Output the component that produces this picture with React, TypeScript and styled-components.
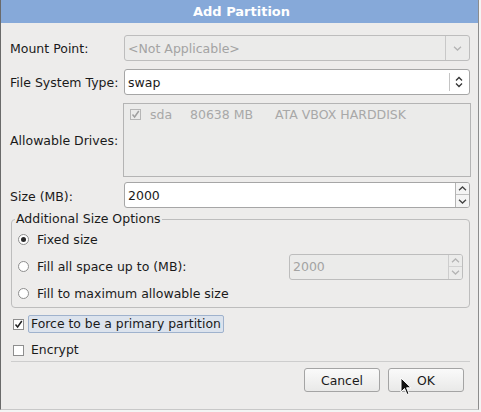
import React from "react";
import styled, { createGlobalStyle } from "styled-components";

const Global = createGlobalStyle`
  html, body { margin: 0; padding: 0; background: #f4f4f4; }
  body { font-family: "DejaVu Sans", "Liberation Sans", sans-serif; font-size: 12.5px; color: #1a1a1a; }
`;

const Window = styled.div`
  position: relative;
  width: 477px;
  height: 409px;
  background: #edeceb;
  border-left: 1px solid #6a6a6a;
  border-right: 1px solid #8c8c8c;
  border-bottom: 1px solid #c8c8c8;
  display: flex;
  flex-direction: column;
  overflow: hidden;
`;

const TitleBar = styled.div`
  height: 23px;
  background: #86a9d9;
  color: #ffffff;
  font-weight: bold;
  font-size: 13px;
  display: flex;
  align-items: center;
  justify-content: center;
  padding-left: 4px;
`;

const Body = styled.div`
  display: flex;
  flex-direction: column;
  padding: 12px 8px 0 9px;
`;

const FormGrid = styled.div`
  display: grid;
  grid-template-columns: 114px 1fr;
  row-gap: 8px;
  align-items: center;
`;

const Label = styled.div`
  white-space: nowrap;
`;

const Field = styled.div<{ $disabled?: boolean }>`
  height: 26px;
  box-sizing: border-box;
  border: 1px solid ${(p) => (p.$disabled ? "#bdbdbd" : "#a6a6a6")};
  border-radius: 3px;
  background: ${(p) => (p.$disabled ? "#ebebea" : "#ffffff")};
  color: ${(p) => (p.$disabled ? "#a3a3a3" : "#1a1a1a")};
  display: flex;
  align-items: center;
  overflow: hidden;
`;

const SizeField = styled(Field)`
  margin-top: -3px;
`;

const FieldText = styled.div`
  flex: 1;
  padding-left: 3px;
  white-space: nowrap;
`;

const ComboButton = styled.div`
  width: 24px;
  height: 100%;
  border-left: 1px solid #c8c8c8;
  display: flex;
  align-items: center;
  justify-content: center;
  box-sizing: border-box;
`;

const ComboSplit = styled.div`
  width: 20px;
  height: 100%;
  display: flex;
  align-items: center;
  justify-content: center;
  position: relative;
  &::before {
    content: "";
    position: absolute;
    left: 0;
    top: 3px;
    bottom: 3px;
    border-left: 1px solid #c4c4c4;
  }
`;

const SpinButtons = styled.div<{ $disabled?: boolean }>`
  width: 13px;
  height: 100%;
  border-left: 1px solid ${(p) => (p.$disabled ? "#cdcdcd" : "#b4b4b4")};
  display: grid;
  grid-template-rows: 1fr 1fr;
  background: ${(p) => (p.$disabled ? "#ebebea" : "#f4f4f4")};
`;

const SpinHalf = styled.div<{ $top?: boolean; $disabled?: boolean }>`
  display: flex;
  align-items: center;
  justify-content: center;
  border-bottom: ${(p) => (p.$top ? `1px solid ${p.$disabled ? "#d2d2d2" : "#c0c0c0"}` : "none")};
`;

const DriveBox = styled.div`
  height: 74px;
  box-sizing: border-box;
  border: 1px solid #b4b4b4;
  background: #ebebea;
  margin-left: -1px;
  margin-right: -1px;
  padding: 4px 0 0 6px;
  color: #a8a8a8;
  display: flex;
  align-items: flex-start;
`;

const DriveRow = styled.div`
  display: flex;
  align-items: center;
  height: 12px;
`;

const DriveCell = styled.span<{ $w: number }>`
  width: ${(p) => p.$w}px;
  white-space: nowrap;
`;

const Frame = styled.fieldset`
  margin: 4px 0 0 1px;
  padding: 0 6px 0 6px;
  border: 1px solid #bdbdbd;
  border-radius: 4px;
  display: flex;
  flex-direction: column;
  min-width: 0;
`;

const Legend = styled.legend`
  padding: 0 1px;
  margin-left: -3px;
  line-height: 14px;
`;

const OptionRow = styled.div`
  height: 27px;
  display: flex;
  align-items: center;
  gap: 8px;
`;

const OptionText = styled.span`
  flex: 1;
  white-space: nowrap;
`;

const Radio = styled.span<{ $on?: boolean }>`
  width: 11px;
  height: 11px;
  box-sizing: border-box;
  border-radius: 50%;
  border: 1px solid #8e8e8e;
  background: #ffffff;
  display: inline-flex;
  align-items: center;
  justify-content: center;
  &::after {
    content: "";
    width: 5px;
    height: 5px;
    border-radius: 50%;
    background: ${(p) => (p.$on ? "#2a2a2a" : "transparent")};
  }
`;

const SmallSpin = styled.div`
  width: 174px;
`;

const CheckRow = styled.div<{ $top: number }>`
  height: 22px;
  margin-top: ${(p) => p.$top}px;
  display: flex;
  align-items: center;
  gap: 6px;
  padding-left: 3px;
`;

const CheckBox = styled.span<{ $disabled?: boolean }>`
  width: 11px;
  height: 11px;
  box-sizing: border-box;
  border: 1px solid ${(p) => (p.$disabled ? "#b6b6b6" : "#8e8e8e")};
  background: ${(p) => (p.$disabled ? "#ebebea" : "#ffffff")};
  display: inline-flex;
  align-items: center;
  justify-content: center;
  flex: none;
`;

const CheckLabel = styled.span<{ $focus?: boolean }>`
  padding: 1px 2px;
  margin-left: -2px;
  border: 1px solid ${(p) => (p.$focus ? "#9fb2cd" : "transparent")};
  border-radius: 2px;
  background: ${(p) => (p.$focus ? "#dce3ed" : "transparent")};
  line-height: 14px;
  font-size: 12.4px;
`;

const Separator = styled.div`
  height: 1px;
  background: #cdcdcd;
  margin: 0 0 0 1px;
`;

const ButtonBar = styled.div`
  display: flex;
  justify-content: flex-end;
  gap: 8px;
  padding: 6px 6px 0 0;
`;

const Button = styled.div`
  width: 76px;
  height: 24px;
  box-sizing: border-box;
  border: 1px solid #a4a4a4;
  border-radius: 3px;
  background: linear-gradient(#fafafa, #e9e9e8);
  display: flex;
  align-items: center;
  justify-content: center;
  font-size: 12.4px;
`;

const Cursor = styled.svg`
  position: absolute;
  left: 399px;
  top: 377px;
`;

const Chevron = ({ dir, color }: { dir: "up" | "down"; color: string }) => (
  <svg width="9" height="5" viewBox="0 0 9 5">
    <path
      d={dir === "down" ? "M1 0.8 L4.5 4 L8 0.8" : "M1 4.2 L4.5 1 L8 4.2"}
      fill="none"
      stroke={color}
      strokeWidth="1.3"
    />
  </svg>
);

const UpDown = () => (
  <svg width="8" height="12" viewBox="0 0 8 12">
    <path d="M1 4.5 L4 1.5 L7 4.5" fill="none" stroke="#333" strokeWidth="1.3" />
    <path d="M1 7.5 L4 10.5 L7 7.5" fill="none" stroke="#333" strokeWidth="1.3" />
  </svg>
);

const Tick = ({ color }: { color: string }) => (
  <svg width="9" height="9" viewBox="0 0 9 9">
    <path d="M1.5 4.5 L3.6 7 L7.8 1" fill="none" stroke={color} strokeWidth="1.5" />
  </svg>
);

export default function App() {
  return (
    <>
      <Global />
      <Window>
        <TitleBar>Add Partition</TitleBar>
        <Body>
          <FormGrid>
            <Label>Mount Point:</Label>
            <Field $disabled>
              <FieldText>&lt;Not Applicable&gt;</FieldText>
              <ComboButton>
                <Chevron dir="down" color="#b4b4b4" />
              </ComboButton>
            </Field>

            <Label>File System Type:</Label>
            <Field>
              <FieldText>swap</FieldText>
              <ComboSplit>
                <UpDown />
              </ComboSplit>
            </Field>

            <Label>Allowable Drives:</Label>
            <DriveBox>
              <DriveRow>
                <CheckBox $disabled>
                  <Tick color="#a0a0a0" />
                </CheckBox>
                <DriveCell $w={9} />
                <DriveCell $w={40}>sda</DriveCell>
                <DriveCell $w={85}>80638 MB</DriveCell>
                <DriveCell $w={140}>ATA VBOX HARDDISK</DriveCell>
              </DriveRow>
            </DriveBox>

            <Label>Size (MB):</Label>
            <SizeField>
              <FieldText>2000</FieldText>
              <SpinButtons>
                <SpinHalf $top>
                  <Chevron dir="up" color="#444" />
                </SpinHalf>
                <SpinHalf>
                  <Chevron dir="down" color="#444" />
                </SpinHalf>
              </SpinButtons>
            </SizeField>
          </FormGrid>

          <Frame>
            <Legend>Additional Size Options</Legend>
            <OptionRow>
              <Radio $on />
              <OptionText>Fixed size</OptionText>
            </OptionRow>
            <OptionRow>
              <Radio />
              <OptionText>Fill all space up to (MB):</OptionText>
              <SmallSpin>
                <Field $disabled>
                  <FieldText>2000</FieldText>
                  <SpinButtons $disabled>
                    <SpinHalf $top $disabled>
                      <Chevron dir="up" color="#b4b4b4" />
                    </SpinHalf>
                    <SpinHalf $disabled>
                      <Chevron dir="down" color="#b4b4b4" />
                    </SpinHalf>
                  </SpinButtons>
                </Field>
              </SmallSpin>
            </OptionRow>
            <OptionRow>
              <Radio />
              <OptionText>Fill to maximum allowable size</OptionText>
            </OptionRow>
          </Frame>

          <CheckRow $top={5}>
            <CheckBox>
              <Tick color="#222" />
            </CheckBox>
            <CheckLabel $focus>Force to be a primary partition</CheckLabel>
          </CheckRow>
          <CheckRow $top={4}>
            <CheckBox />
            <CheckLabel>Encrypt</CheckLabel>
          </CheckRow>
          <Separator />
          <ButtonBar>
            <Button>Cancel</Button>
            <Button>OK</Button>
          </ButtonBar>
        </Body>
        <Cursor width="12" height="19" viewBox="0 0 12 19">
          <path d="M1 1 L1 15 L4.5 11.5 L7 17.5 L9 16.6 L6.6 10.8 L11 10.8 Z" fill="#111" stroke="#fff" strokeWidth="1" />
        </Cursor>
      </Window>
    </>
  );
}
